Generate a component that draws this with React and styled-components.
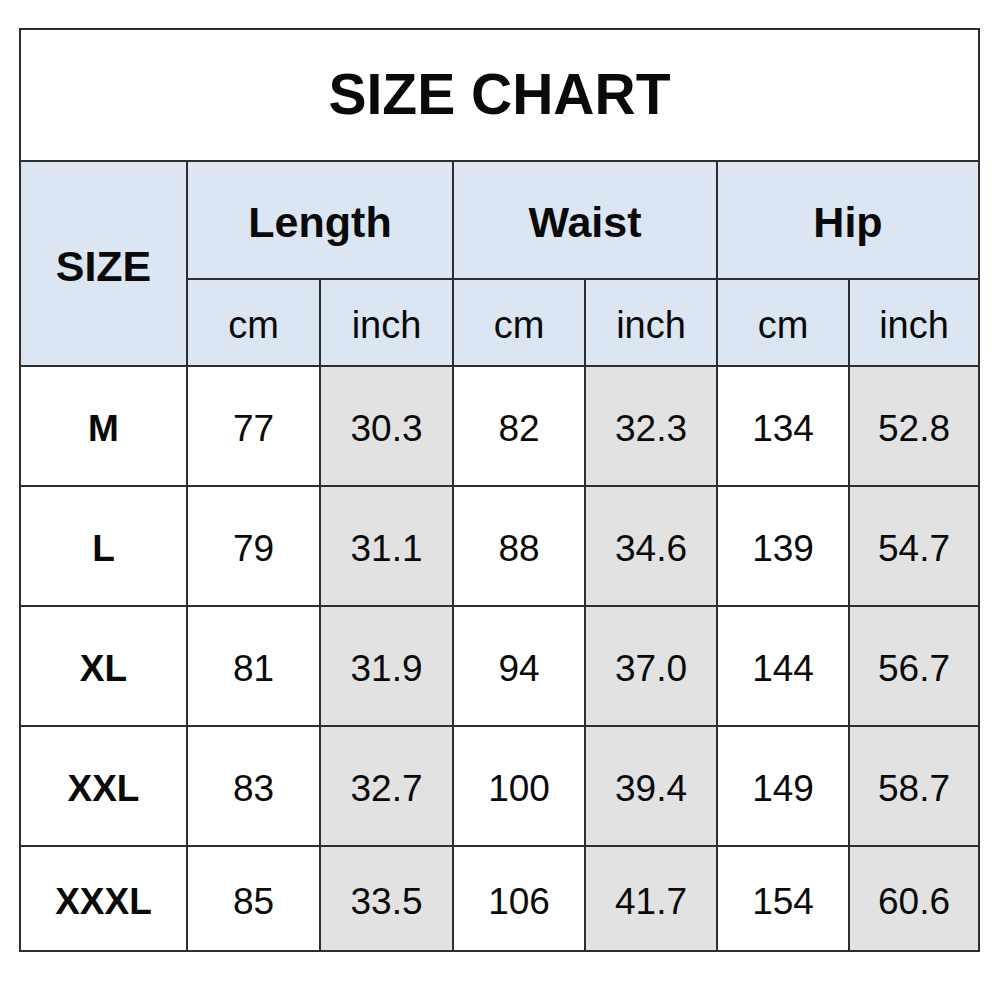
import React from "react";
import styled, { createGlobalStyle } from "styled-components";

const Global = createGlobalStyle`
  html, body { margin: 0; padding: 0; background: #ffffff; }
  body { font-family: "Liberation Sans", Arial, sans-serif; }
`;

const Page = styled.div`
  width: 1000px;
  height: 1000px;
  box-sizing: border-box;
  padding: 28px 0 0 19px;
  background: #ffffff;
`;

const Chart = styled.div`
  display: grid;
  width: 961px;
  box-sizing: border-box;
  grid-template-columns: 165px 131px 131px 130px 130px 130px 128px;
  grid-template-rows: 130px 116px 85px 118px 118px 118px 118px 103px;
  gap: 2px;
  padding: 2px;
  background: #2e2e2e;
`;

const tones = {
  white: "#ffffff",
  blue: "#dce6f2",
  gray: "#e2e2e2",
};

const Cell = styled.div`
  display: flex;
  align-items: center;
  justify-content: center;
  box-sizing: border-box;
  padding-top: 5px;
  background: ${(p) => tones[p.$tone || "white"]};
  color: #0a0a0a;
  font-size: ${(p) => p.$size || 37}px;
  font-weight: ${(p) => (p.$bold ? 700 : 400)};
  grid-column: ${(p) => p.$col || "auto"};
  grid-row: ${(p) => p.$row || "auto"};
  line-height: 1;
  white-space: nowrap;
`;

const Title = styled(Cell)`
  grid-column: 1 / -1;
  font-size: 57px;
  font-weight: 700;
  padding-top: 0;
  padding-bottom: 2px;
`;

const rows = [
  ["M", "77", "30.3", "82", "32.3", "134", "52.8"],
  ["L", "79", "31.1", "88", "34.6", "139", "54.7"],
  ["XL", "81", "31.9", "94", "37.0", "144", "56.7"],
  ["XXL", "83", "32.7", "100", "39.4", "149", "58.7"],
  ["XXXL", "85", "33.5", "106", "41.7", "154", "60.6"],
];

export default function App() {
  return (
    <>
      <Global />
      <Page>
        <Chart>
          <Title>SIZE CHART</Title>
          <Cell $tone="blue" $bold $size={43} $row="span 2">SIZE</Cell>
          <Cell $tone="blue" $bold $size={43} $col="span 2">Length</Cell>
          <Cell $tone="blue" $bold $size={43} $col="span 2">Waist</Cell>
          <Cell $tone="blue" $bold $size={43} $col="span 2">Hip</Cell>
          {["cm", "inch", "cm", "inch", "cm", "inch"].map((u, i) => (
            <Cell key={i} $tone="blue" $size={38}>{u}</Cell>
          ))}
          {rows.map((r) =>
            r.map((v, i) => (
              <Cell
                key={r[0] + i}
                $bold={i === 0}
                $tone={i > 0 && i % 2 === 0 ? "gray" : "white"}
                $size={37}
              >
                {v}
              </Cell>
            ))
          )}
        </Chart>
      </Page>
    </>
  );
}
